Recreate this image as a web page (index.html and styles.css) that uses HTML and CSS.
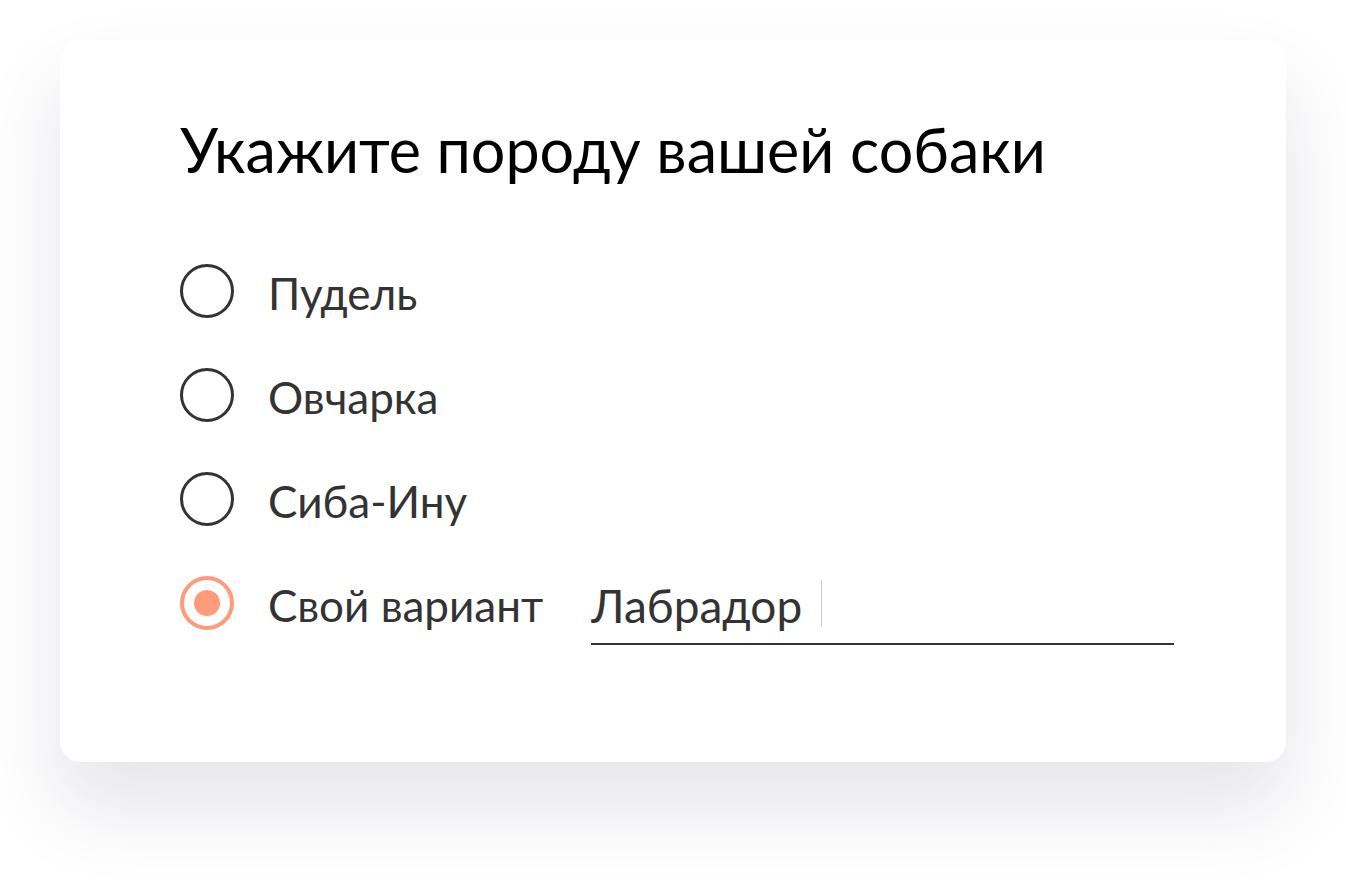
FILE: index.html
```html
<!DOCTYPE html>
<html lang="ru">
<head>
    <meta charset="UTF-8">
    <meta name="viewport" content="width=device-width, initial-scale=1.0">
    <title>Порода собаки</title>
    <link rel="stylesheet" href="styles.css">
</head>
<body>
    <div class="card">
        <h1>Укажите породу вашей собаки</h1>

        <div class="options">
            <label class="option">
                <input type="radio" name="breed" value="poodle">
                <span class="option-label">Пудель</span>
            </label>
            <label class="option">
                <input type="radio" name="breed" value="shepherd">
                <span class="option-label">Овчарка</span>
            </label>
            <label class="option">
                <input type="radio" name="breed" value="shiba">
                <span class="option-label">Сиба-Ину</span>
            </label>
            <label class="option">
                <input type="radio" name="breed" value="other" checked>
                <span class="option-label">Свой вариант</span>
                <span class="field">
                    <span class="field-text">Лабрадор</span><span class="caret"></span>
                </span>
            </label>
        </div>
    </div>
</body>
</html>
```

FILE: styles.css
```css
body {
    margin: 0;
    padding-bottom: 120px;
    background: #fff;
    font-family: Lato, "Open Sans", sans-serif;
}
.card {
    width: 1226px;
    height: 722px;
    box-sizing: border-box;
    margin: 40px 0 0 60px;
    padding: 0 120px;
    background: #fff;
    border-radius: 20px;
    box-shadow: 0 45px 80px rgba(50, 50, 100, 0.13);
}
h1 {
    margin: 0;
    padding-top: 70px;
    font-size: 61px;
    line-height: 80px;
    font-weight: 400;
    color: #000;
}
.options {
    display: flex;
    flex-direction: column;
    gap: 48px;
    margin-top: 73px;
}
.option {
    display: flex;
    align-items: center;
    height: 56px;
    font-size: 44px;
    color: #333;
    white-space: nowrap;
    cursor: pointer;
}
.option-label {
    padding-top: 4px;
}
.option input {
    appearance: none;
    flex-shrink: 0;
    margin: 0 34px 0 0;
    width: 54px;
    height: 54px;
    box-sizing: border-box;
    border: 3.5px solid #333;
    border-radius: 50%;
    display: flex;
    align-items: center;
    justify-content: center;
}
.option input:checked {
    border: 4px solid #ff9b78;
}
.option input:checked::after {
    content: "";
    width: 26px;
    height: 26px;
    border-radius: 50%;
    background: #ff9b78;
}
.field {
    display: flex;
    align-items: center;
    flex-shrink: 0;
    width: 583px;
    height: 56px;
    margin: 0 0 -14px 48px;
    padding-bottom: 12px;
    border-bottom: 2px solid #333;
    font-size: 46px;
}
.field-text {
    padding-top: 4px;
}
.caret {
    width: 1px;
    height: 46px;
    margin-left: 19px;
    background: #c8c8c8;
}
```
